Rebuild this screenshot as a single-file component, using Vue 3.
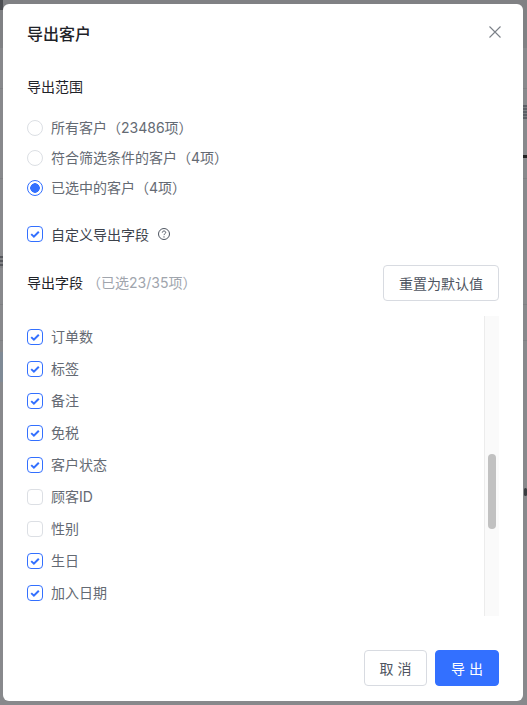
<template>
  <div class="page">
    <!-- bits of the page behind the overlay, visible at the edges -->
    <span class="smudge s1"></span>
    <span class="smudge s2"></span>
    <span class="smudge s3"></span>
    <span class="smudge s4"></span>
    <span class="smudge s5"></span>
    <span class="smudge s6"></span>

    <div class="modal">
      <div class="header">
        <h2 class="title">导出客户</h2>
        <svg class="close" width="16" height="16" viewBox="0 0 16 16" fill="none">
          <path d="M2.5 2.5l11 11M13.5 2.5l-11 11" stroke="#7b8088" stroke-width="1.1" />
        </svg>
      </div>

      <div class="body">
        <div class="label">导出范围</div>

        <div class="radios">
          <div v-for="r in ranges" :key="r.text" class="radio-row">
            <span class="radio" :class="{ on: r.on }"></span>
            <span class="opt">{{ r.text }}</span>
          </div>
        </div>

        <div class="custom">
          <span class="check on">
            <svg width="16" height="16" viewBox="0 0 16 16" fill="none">
              <path d="M4.2 8.1l2.7 2.6 4.9-5" stroke="#3370ff" stroke-width="2" />
            </svg>
          </span>
          <span class="custom-text">自定义导出字段</span>
          <svg class="help" width="14" height="14" viewBox="0 0 14 14" fill="none">
            <circle cx="7" cy="7" r="5.5" stroke="#4e5561" stroke-width="1" />
            <path d="M5.3 5.6c0-1 .8-1.6 1.7-1.6s1.7.6 1.7 1.5c0 1.3-1.7 1.3-1.7 2.6" stroke="#4e5561" stroke-width="1" />
            <circle cx="7" cy="9.9" r=".65" fill="#4e5561" />
          </svg>
        </div>

        <div class="fields-head">
          <div>
            <span class="label">导出字段</span>
            <span class="count">（已选23/35项）</span>
          </div>
          <button class="btn reset">重置为默认值</button>
        </div>

        <div class="fields">
          <div class="list">
            <div v-for="f in fields" :key="f.text" class="field-row">
              <span class="check" :class="{ on: f.on }">
                <svg v-if="f.on" width="16" height="16" viewBox="0 0 16 16" fill="none">
                  <path d="M4.2 8.1l2.7 2.6 4.9-5" stroke="#3370ff" stroke-width="2" />
                </svg>
              </span>
              <span class="opt">{{ f.text }}</span>
            </div>
          </div>
          <div class="track"><div class="thumb"></div></div>
        </div>
      </div>

      <div class="footer">
        <button class="btn cancel">取 消</button>
        <button class="btn primary">导 出</button>
      </div>
    </div>
  </div>
</template>

<script setup>
const ranges = [
  { text: '所有客户（23486项）', on: false },
  { text: '符合筛选条件的客户（4项）', on: false },
  { text: '已选中的客户（4项）', on: true },
]

const fields = [
  { text: '订单数', on: true },
  { text: '标签', on: true },
  { text: '备注', on: true },
  { text: '免税', on: true },
  { text: '客户状态', on: true },
  { text: '顾客ID', on: false },
  { text: '性别', on: false },
  { text: '生日', on: true },
  { text: '加入日期', on: true },
]
</script>

<style>
body {
  background: #88898c;
}
</style>

<style scoped>
.page {
  position: relative;
  width: 527px;
  height: 705px;
  box-sizing: border-box;
  padding: 4px 4px 4px 3px;
  background:
    linear-gradient(#808184 0 48px, transparent 48px),
    linear-gradient(transparent 88px, #7f8083 88px 89px, transparent 89px),
    linear-gradient(transparent 178px, #7f8083 178px 179px, transparent 179px),
    linear-gradient(transparent 304px, #7f8083 304px 305px, transparent 305px),
    linear-gradient(transparent 340px, #7f8083 340px 341px, transparent 341px),
    #88898c;
  font-family: Inter, "Noto Sans CJK SC", sans-serif;
}

.smudge {
  position: absolute;
  display: block;
}

.s1 { left: 0; top: 0; width: 3px; height: 10px; background: #4c4e52; }
.s2 { left: 0; top: 256px; width: 3px; height: 12px; background: repeating-linear-gradient(#55575c 0 2px, #808184 2px 4px); }
.s3 { left: 0; top: 352px; width: 3px; height: 30px; background: #7f8a96; }
.s4 { right: 0; top: 105px; width: 4px; height: 14px; background: repeating-linear-gradient(#5c5f66 0 2px, #7c7e82 2px 3px); }
.s5 { right: 0; top: 155px; width: 4px; height: 3px; background: #222; }
.s6 { right: 0; top: 488px; width: 3px; height: 8px; background: #3a3c40; border-radius: 2px; }

.modal {
  position: relative;
  height: 100%;
  background: #fff;
  border-radius: 6px;
  display: flex;
  flex-direction: column;
  padding: 0 24px 15px;
  box-sizing: border-box;
}

.header {
  display: flex;
  justify-content: space-between;
  align-items: center;
  height: 58px;
  flex: none;
}

.title {
  margin: 0;
  font-size: 16px;
  font-weight: 500;
  color: #1f2329;
}

.close { margin-right: -4px; margin-top: -3px; }

.body {
  flex: 1;
  padding-top: 14px;
}

.label {
  font-size: 14px;
  color: #1f2329;
  line-height: 22px;
}

.radios {
  margin-top: 15px;
  display: flex;
  flex-direction: column;
}

.radio-row, .field-row {
  display: flex;
  align-items: center;
  gap: 8px;
  height: 30px;
}

.field-row { height: 32px; }

.radio {
  width: 16px;
  height: 16px;
  box-sizing: border-box;
  border: 1px solid #dcdfe4;
  border-radius: 50%;
  display: block;
}

.radio.on {
  border-color: #3370ff;
  background: radial-gradient(circle, #3370ff 0 4.5px, #fff 5px);
}

.opt {
  font-size: 14px;
  color: #646a73;
  line-height: 22px;
}

.custom {
  display: flex;
  align-items: center;
  height: 22px;
  margin-top: 20px;
}

.custom-text {
  margin-left: 8px;
  font-size: 14px;
  color: #3c424c;
}

.help { margin-left: 8px; }

.check {
  width: 16px;
  height: 16px;
  box-sizing: border-box;
  border: 1px solid #dcdfe4;
  border-radius: 4px;
  display: block;
  flex: none;
}

.check svg {
  display: block;
  margin: -1px;
}

.check.on { border-color: #3370ff; }

.fields-head {
  display: flex;
  justify-content: space-between;
  align-items: center;
  margin-top: 20px;
}

.count {
  font-size: 14px;
  color: #a0a5ad;
  margin-left: 4px;
}

.btn {
  font-family: inherit;
  font-size: 14px;
  height: 36px;
  border-radius: 4px;
  border: 1px solid #d8dbe1;
  background: #fff;
  color: #4e5561;
  padding: 0;
}

.reset { width: 116px; }

.fields {
  display: flex;
  height: 300px;
  margin-top: 15px;
}

.list {
  flex: 1;
  padding-top: 5px;
}

.track {
  width: 15px;
  box-sizing: border-box;
  background: #fafafa;
  border-left: 1px solid #ececec;
  padding-top: 138px;
  padding-left: 3px;
}

.thumb {
  width: 8px;
  height: 75px;
  background: #c1c1c1;
  border-radius: 4px;
}

.footer {
  flex: none;
  display: flex;
  justify-content: flex-end;
  gap: 8px;
}

.cancel { width: 63px; }

.primary {
  width: 64px;
  background: #3370ff;
  border-color: #3370ff;
  color: #fff;
}
</style>
